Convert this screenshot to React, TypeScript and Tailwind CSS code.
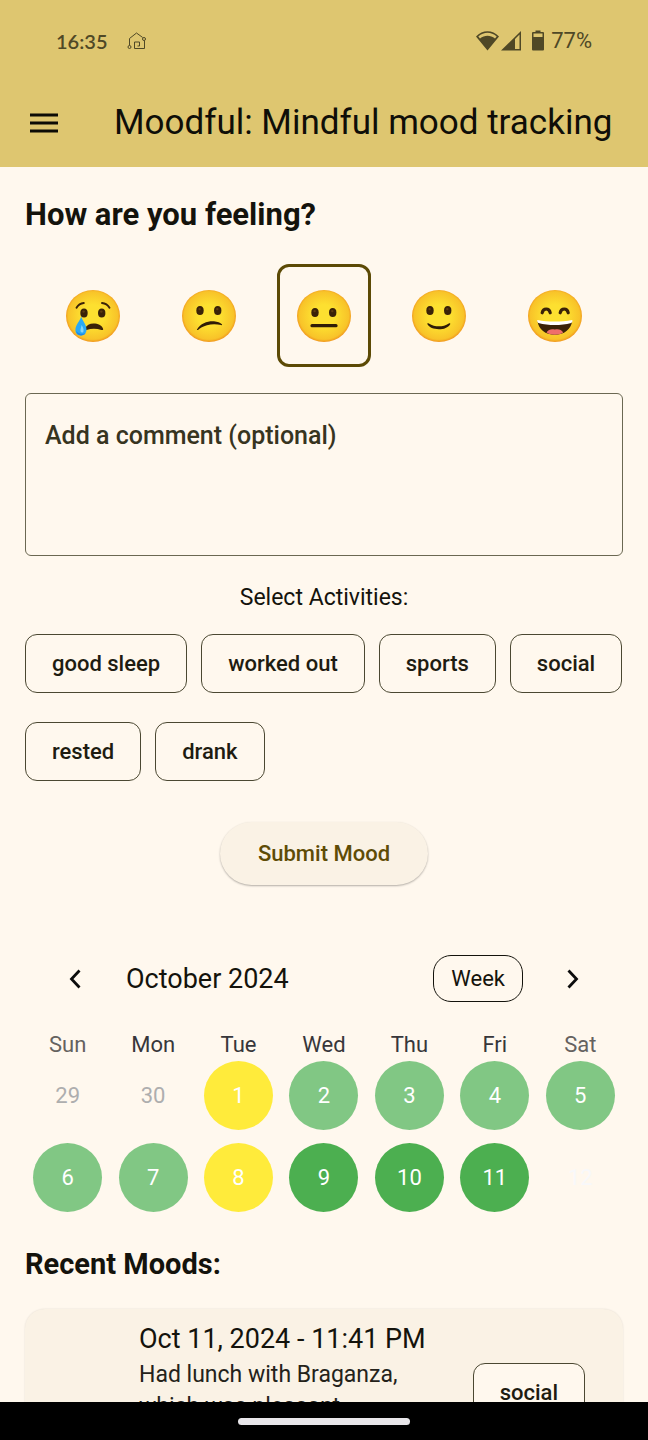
import { useState, type ReactNode } from "react";

function Eyes({ y }: { y: number }) {
  return (
    <>
      {[18, 35.7].map((x) => (
        <g key={x}>
          <ellipse cx={x} cy={y} rx="3.7" ry="4.5" fill="#3a2208" />
          <ellipse cx={x - 0.4} cy={y - 1.4} rx="1.2" ry="1.2" fill="#5e3d12" />
        </g>
      ))}
    </>
  );
}

function Face({ id, children }: { id: string; children: ReactNode }) {
  return (
    <svg viewBox="0 0 54 52" className="h-[52px] w-[54px]" aria-hidden="true">
      <defs>
        <radialGradient id={`face-${id}`} cx="50%" cy="49%" r="52%">
          <stop offset="0.4" stopColor="#fde030" />
          <stop offset="0.88" stopColor="#f8c329" />
          <stop offset="1" stopColor="#ef8f1c" />
        </radialGradient>
      </defs>
      <ellipse cx="27" cy="26" rx="27" ry="26" fill={`url(#face-${id})`} />
      {children}
    </svg>
  );
}

const moods = [
  {
    name: "Sad",
    art: (
      <>
        <Eyes y={23} />
        <path d="M10.5 17.8C12 15.2 14.6 13.3 17.8 13M36 13C39.2 13.3 42 15.2 43.5 17.8" fill="none" stroke="#3a2208" strokeWidth="1.900" strokeLinecap="round" />
        <path d="M19.2 38.4C20.5 35.4 23.5 33.6 27.5 33.6C32 33.6 35.6 35.5 37 38.5C37.5 39.9 36.8 40.4 35.4 39.9C30.5 38.3 25 38.4 20.5 39.9C19.2 40.2 18.8 39.5 19.2 38.4Z" fill="#3a2208" />
        <path d="M15.2 26.5C16.2 30.5 20.6 34.5 20.5 39.7C20.4 43.2 18.2 45.4 14.9 45.4C11.6 45.4 9.4 43.2 9.4 39.9C9.4 34.7 14.3 30.5 15.2 26.5Z" fill="#29a9f5" />
        <path d="M15.5 35C17 37 17.8 39 17.5 41.2C17.3 42.8 15.2 43 14.6 41.4C14 39.5 15.4 37.500 15.5 35Z" fill="#81d4fa" />
        <path d="M10 41C10.5 43.8 12.5 45.4 15 45.4C17 45.4 18.6 44.6 19.5 43.2C16 44.5 12.5 43.8 10 41Z" fill="#1e88e5" />
      </>
    ),
  },
  {
    name: "Uneasy",
    art: (
      <>
        <Eyes y={20.5} />
        <path d="M15 39.5C18.5 33 26 30.8 32 31.2C35.5 31.5 38.5 32.7 39.9 34.2C40.3 34.8 39.9 35.4 39.1 35.1C34.5 33.8 29.5 33.8 25 35.2C21 36.4 18.3 38 16 39.9C15.3 40.3 14.7 40.1 15 39.5Z" fill="#2f1c07" />
      </>
    ),
  },
  {
    name: "Neutral",
    art: (
      <>
        <Eyes y={22.5} />
        <path d="M15 35.7H39" stroke="#2f1c07" strokeWidth="3.2" strokeLinecap="round" />
      </>
    ),
  },
  {
    name: "Happy",
    art: (
      <>
        <Eyes y={20.5} />
        <path d="M15.3 34.1C15.1 33.2 16 32.9 16.8 33.5C23 37.3 31 37.3 36.8 33.5C37.7 32.9 38.5 33.3 38.2 34.2C36.2 37.6 31.8 39.3 26.8 39.3C21.8 39.3 17.2 37.5 15.3 34.1Z" fill="#2f1c07" />
      </>
    ),
  },
  {
    name: "Great",
    art: (
      <>
        <path d="M14.2 22.8C14.7 20.2 16.2 19 18.2 19S21.7 20.2 22.2 22.8M32.2 22.8C32.7 20.2 34.2 19 36.2 19S39.7 20.2 40.2 22.8" fill="none" stroke="#3a2208" strokeWidth="3.2" strokeLinecap="round" />
        <path d="M9.5 31C10.5 39.5 17.5 44.8 26.8 44.8S43 39.5 44.2 31C32 34.5 21.5 34.5 9.5 31Z" fill="#3a2208" />
        <path d="M18.5 42.6C20.5 39.3 23.5 38.8 26.8 39.6C30.2 38.8 33.2 39.3 35.2 42.6C33 44 30 44.8 26.8 44.8S20.8 44 18.5 42.6Z" fill="#ef6f6a" />
        <path d="M9.4 30C20.5 32 33 32 44.2 30C44.8 31.2 44.4 32.2 43.2 32.9C32.5 35.6 21 35.6 10.4 32.9C9.3 32.200 9 31.2 9.4 30Z" fill="#ffffff" />
      </>
    ),
  },
];

const activities = ["good sleep", "worked out", "sports", "social", "rested", "drank"];

const yellow = "bg-[#ffeb3b] text-white";
const light = "bg-[#81c784] text-white";
const green = "bg-[#4caf50] text-white";

const weekdays = [
  { label: "Sun", tone: "text-[#65625f]" },
  { label: "Mon", tone: "text-[#37363a]" },
  { label: "Tue", tone: "text-[#37363a]" },
  { label: "Wed", tone: "text-[#37363a]" },
  { label: "Thu", tone: "text-[#37363a]" },
  { label: "Fri", tone: "text-[#37363a]" },
  { label: "Sat", tone: "text-[#65625f]" },
];

const weeks = [
  [
    { day: 29, tone: "text-[#aeaeae]" },
    { day: 30, tone: "text-[#aeaeae]" },
    { day: 1, tone: yellow },
    { day: 2, tone: light },
    { day: 3, tone: light },
    { day: 4, tone: light },
    { day: 5, tone: light },
  ],
  [
    { day: 6, tone: light },
    { day: 7, tone: light },
    { day: 8, tone: yellow },
    { day: 9, tone: green },
    { day: 10, tone: green },
    { day: 11, tone: green },
    { day: 12, tone: "text-[#f8f8fa]" },
  ],
];

function StatusBar() {
  return (
    <div className="flex h-[81px] items-center justify-between px-14 text-[#4f4826]">
      <div className="flex items-center gap-5">
        <span className="font-['Lato',sans-serif] text-xl font-semibold">16:35</span>
        <svg viewBox="0 0 20 18" className="h-[18px] w-5" fill="none" stroke="currentColor" strokeWidth="1" aria-hidden="true">
          <path d="M2.5 13.5V6.500L9.500 1L15.700 5.5M17.5 8.5V16.5H7.5V10H12.500V14H10.500" />
          <circle cx="2.5" cy="15" r="1.5" />
          <circle cx="17" cy="7" r="1.5" />
        </svg>
      </div>
      <div className="flex items-center">
        <svg viewBox="0 0 46 22" className="h-[22px] w-[46px]" fill="currentColor" aria-hidden="true">
          <path d="M0 6.5C6.5 -0.5 16.5 -0.5 23 6.5L11.5 20.5ZM2.3 6.6L4 8.6C8.5 4.8 14.5 4.8 19 8.6L20.7 6.6C15 1.6 8 1.6 2.3 6.6Z" fillRule="evenodd" />
          <path d="M25 20.5L45 1V20.5ZM39 9V19H43.5V4.6Z" fillRule="evenodd" />
        </svg>
        <svg viewBox="0 0 12 22" className="ml-[10px] h-[22px] w-3" fill="currentColor" aria-hidden="true">
          <path d="M3.5 0.5H8.5V2H11Q12 2 12 3V19.5Q12 20.5 11 20.5H1Q0 20.5 0 19.5V3Q0 2 1 2H3.5ZM1.5 3.5V7H10.5V3.5Z" fillRule="evenodd" />
        </svg>
        <span className="ml-[7px] text-[22px]">77%</span>
      </div>
    </div>
  );
}

function Chevron({ d }: { d: string }) {
  return (
    <svg viewBox="0 0 12 20" className="h-5 w-3" fill="none" stroke="#0c0c0c" strokeWidth="2.8" aria-hidden="true">
      <path d={d} />
    </svg>
  );
}

const chip = "rounded-xl border border-[#4b4832] px-[26px] text-[22px] leading-[57px] font-medium text-[#1e1c11]";

export default function App() {
  const [mood, setMood] = useState("Neutral");
  const [picked, setPicked] = useState<string[]>([]);

  const toggle = (name: string) =>
    setPicked(picked.includes(name) ? picked.filter((p) => p !== name) : [...picked, name]);

  return (
    <div className="flex h-screen flex-col overflow-hidden bg-[#fff8ee] font-['Roboto',sans-serif] text-[#14130c]">
      <header className="shrink-0 bg-[#dec670] pb-0.5">
        <StatusBar />
        <div className="flex h-[84px] items-center gap-14 pr-6 pl-[30px]">
          <button type="button" aria-label="Open menu">
            <svg viewBox="0 0 28 20" className="h-5 w-7" fill="#0c0b06" aria-hidden="true">
              <path d="M0 0.5h28v3H0zM0 8.5h28v3H0zM0 16.5h28v3H0z" />
            </svg>
          </button>
          <h1 className="text-[35px] leading-10 whitespace-nowrap text-[#0f0e08]">Moodful: Mindful mood tracking</h1>
        </div>
      </header>

      <main className="flex min-h-0 flex-1 flex-col overflow-hidden px-[25px] pt-7">
        <h2 className="text-[31px] leading-10 font-bold">How are you feeling?</h2>

        <div className="mt-[29px] flex justify-evenly" role="group" aria-label="Mood">
          {moods.map((m) => (
            <button
              key={m.name}
              type="button"
              aria-label={m.name}
              aria-pressed={mood === m.name}
              onClick={() => setMood(m.name)}
              className={
                mood === m.name
                  ? "flex h-[103px] w-[94px] items-center justify-center rounded-xl border-3 border-[#5c4a05]"
                  : "flex h-[103px] w-[94px] items-center justify-center rounded-xl"
              }
            >
              <Face id={m.name}>{m.art}</Face>
            </button>
          ))}
        </div>

        <textarea
          aria-label="Add a comment (optional)"
          placeholder="Add a comment (optional)"
          className="mt-[26px] h-[163px] w-full shrink-0 resize-none rounded-md border border-[#6b6852] bg-transparent px-[19px] py-6 text-[25px] leading-9 font-medium text-[#2e2b1d] outline-none placeholder:text-[#37341f]"
        />

        <p className="mt-[26px] text-center text-[23px] leading-8">Select Activities:</p>

        <div className="mt-5 flex flex-wrap gap-x-3.5 gap-y-[29px]">
          {activities.map((a) => (
            <button
              key={a}
              type="button"
              aria-pressed={picked.includes(a)}
              onClick={() => toggle(a)}
              className={picked.includes(a) ? `${chip} bg-[#f3e2a7]` : chip}
            >
              {a}
            </button>
          ))}
        </div>

        <button
          type="button"
          className="mt-[41px] shrink-0 self-center rounded-full bg-[#faf2e5] px-[38px] text-[22px] leading-[63px] font-medium text-[#5f4c06] shadow-[0_1px_2px_rgba(0,0,0,0.3)]"
        >
          Submit Mood
        </button>

        <div className="mt-[70px] flex items-center px-11">
          <button type="button" aria-label="Previous" className="flex">
            <Chevron d="M10.5 1.5L2.5 10L10.5 18.5" />
          </button>
          <p className="ml-[45px] flex-1 text-[27px] leading-8">October 2024</p>
          <button type="button" className="rounded-[18px] border border-[#14130c] px-[17px] text-[22px] leading-[45px]">
            Week
          </button>
          <button type="button" aria-label="Next" className="ml-11 flex">
            <Chevron d="M1.5 1.5L9.5 10L1.5 18.5" />
          </button>
        </div>

        <table className="mt-[27px] w-full shrink-0 table-fixed border-collapse text-center text-[22px]">
          <thead>
            <tr>
              {weekdays.map((w) => (
                <th key={w.label} scope="col" className={`p-0 leading-8 font-normal ${w.tone}`}>
                  {w.label}
                </th>
              ))}
            </tr>
          </thead>
          <tbody>
            {weeks.map((week) => (
              <tr key={week[0].day}>
                {week.map((d) => (
                  <td key={d.day} className="p-0 pb-[13px]">
                    <button
                      type="button"
                      className={`mx-auto block size-[69px] rounded-full ${d.tone}`}
                    >
                      {d.day}
                    </button>
                  </td>
                ))}
              </tr>
            ))}
          </tbody>
        </table>

        <h2 className="mt-[21px] text-[29px] leading-9 font-bold">Recent Moods:</h2>

        <article className="mt-[27px] flex min-h-[166px] shrink-0 items-center rounded-[20px] bg-[#faf2e5] py-3 pr-[38px] pl-[114px] shadow-[0_0_2px_rgba(0,0,0,0.12)]">
          <div className="min-w-0 flex-1 self-start">
            <h3 className="text-[27px] leading-9">Oct 11, 2024 - 11:41 PM</h3>
            <p className="mt-0.5 max-w-[280px] text-[23px] leading-8 text-[#24221a]">
              Had lunch with Braganza, which was pleasant.
            </p>
          </div>
          <span className={`${chip} bg-[#fff8ee]`}>social</span>
        </article>
      </main>

      <footer className="flex h-[38px] shrink-0 items-center justify-center bg-black">
        <div className="h-[7px] w-[172px] rounded-full bg-[#e8e6ea]" />
      </footer>
    </div>
  );
}
